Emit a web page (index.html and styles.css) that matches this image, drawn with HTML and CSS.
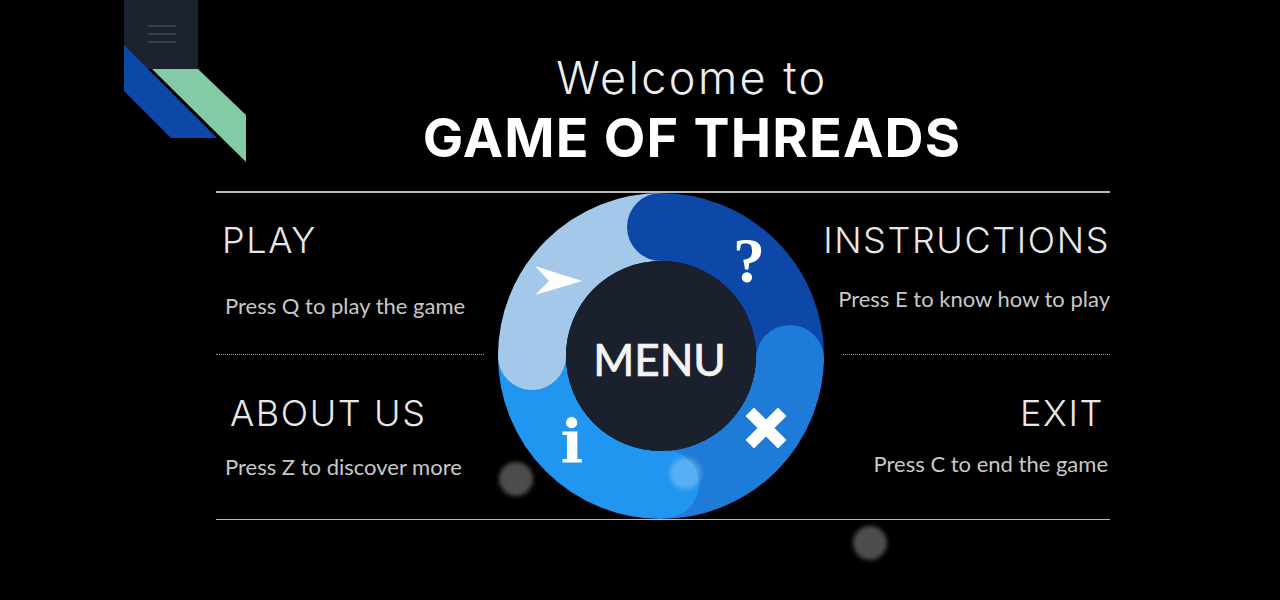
FILE: index.html
```html
<!DOCTYPE html>
<html lang="en">
<head>
    <meta charset="UTF-8">
    <meta name="viewport" content="width=device-width, initial-scale=1.0">
    <title>Game of Threads</title>
    <link rel="stylesheet" href="styles.css">
</head>
<body>

<!-- corner ribbon with the hamburger -->
<svg class="ribbon" width="130" height="170" viewBox="0 0 130 170">
    <rect x="0" y="0" width="74" height="69" fill="#1c2230"/>
    <path d="M24 26h28M24 34h28M24 42h28" stroke="#343b49" stroke-width="2"/>
    <polygon points="0,45 93,138 47,138 0,91" fill="#0d47a8"/>
    <polygon points="28,69 74,69 122,115 122,162" fill="#82cba6"/>
</svg>

<header class="title">
    <p class="welcome">Welcome to</p>
    <h1 class="game-name">GAME OF THREADS</h1>
</header>

<main class="menu">
    <section class="item item-play">
        <h2>PLAY</h2>
        <p>Press Q to play the game</p>
    </section>

    <svg class="wheel" width="326" height="326" viewBox="0 0 326 326">
        <!-- ring parts, each one starts with a round head on top of the previous part -->
        <g fill="none" stroke-width="68">
            <path d="M163 34A129 129 0 0 1 292 163" stroke="#0d47a8"/>
            <path d="M292 163A129 129 0 0 1 163 292" stroke="#1e7cd8"/>
            <path d="M163 292A129 129 0 0 1 34 163" stroke="#2196f0"/>
            <path d="M34 163A129 129 0 0 1 163 34" stroke="#a4c8ea"/>
        </g>
        <circle cx="163" cy="34" r="34" fill="#0d47a8"/>
        <circle cx="292" cy="166" r="34" fill="#1e7cd8"/>
        <circle cx="167" cy="291" r="34" fill="#2196f0"/>
        <circle cx="34" cy="163" r="34" fill="#a4c8ea"/>
        <circle cx="163" cy="163" r="95" fill="#1a202c"/>
        <polygon points="37,73 84,88 37,102 51,88" fill="#fff"/>
        <text class="wheel-glyph glyph-help" x="251" y="89">?</text>
        <text class="wheel-glyph glyph-info" x="74" y="270">i</text>
        <path d="M256 223L280 247M280 223L256 247" stroke="#fff" stroke-width="12" stroke-linecap="square"/>
        <text class="wheel-label" x="161.500" y="183">MENU</text>
    </svg>

    <section class="item item-right item-instructions">
        <h2>INSTRUCTIONS</h2>
        <p>Press E to know how to play</p>
    </section>

    <section class="item item-about">
        <h2>ABOUT US</h2>
        <p>Press Z to discover more</p>
    </section>

    <section class="item item-right item-exit">
        <h2>EXIT</h2>
        <p>Press C to end the game</p>
    </section>
</main>

<div class="bubble bubble-left"></div>
<div class="bubble bubble-wheel"></div>
<div class="bubble bubble-bottom"></div>

</body>
</html>
```

FILE: styles.css
```css
body {
    margin: 0;
    height: 600px;
    overflow: hidden;
    background-color: #000;
    color: #fff;
    font-family: Inter, sans-serif;
}

.ribbon {
    position: absolute;
    top: 0;
    left: 124px;
}

.title {
    height: 191px;
    box-sizing: border-box;
    padding: 52px 0 0 104px;
    text-align: center;
}

.welcome {
    margin: 0;
    font-size: 45px;
    font-weight: 300;
    line-height: 52px;
    letter-spacing: 2.4px;
    color: #eee;
}

.game-name {
    margin: 4px 0 0;
    font-size: 54px;
    font-weight: 700;
    line-height: 60px;
    letter-spacing: 1.2px;
}

.menu {
    display: grid;
    grid-template-columns: 268px 359px 267px;
    grid-template-rows: 162px 1fr;
    width: 894px;
    height: 329px;
    box-sizing: border-box;
    margin-left: 216px;
    border-top: 2px solid #bbb;
    border-bottom: 1px solid #bbb;
}

.item {
    box-sizing: border-box;
}

.item h2 {
    margin: 0;
    font-size: 36px;
    font-weight: 300;
    line-height: 44px;
    letter-spacing: 1.6px;
    color: #e8e8e8;
}

.item p {
    margin: 0;
    font-family: Lato, sans-serif;
    font-size: 22px;
    line-height: 28px;
    white-space: nowrap;
    color: #c8c8c8;
}

.item-right {
    text-align: right;
}

.item-play,
.item-instructions {
    padding-top: 25px;
    border-bottom: 1px dotted #999;
}

.item-about,
.item-exit {
    padding-top: 36px;
}

.item-play h2 {
    padding-left: 6px;
}

.item-play p {
    margin-top: 30px;
    padding-left: 9px;
}

.item-instructions h2 {
    margin-left: -30px;
}

.item-instructions p {
    margin: 23px 0 0 -30px;
}

.item-about h2 {
    padding-left: 14px;
}

.item-about p {
    margin-top: 18px;
    padding-left: 9px;
}

.item-exit h2 {
    padding-right: 6px;
}

.item-exit p {
    margin-top: 15px;
    padding-right: 2px;
}

.wheel {
    grid-column: 2;
    grid-row: 1 / 3;
    margin: 0 0 0 14px;
}

.wheel-glyph {
    fill: #fff;
    font-weight: 700;
    text-anchor: middle;
}

.glyph-help {
    font-family: "Liberation Serif", serif;
    font-size: 64px;
}

.glyph-info {
    font-family: "DejaVu Serif", serif;
    font-size: 60px;
}

.wheel-label {
    fill: #f4f4f4;
    stroke: #f4f4f4;
    stroke-width: 0.6px;
    font-family: Lato, sans-serif;
    font-size: 44px;
    font-weight: 500;
    text-anchor: middle;
}

.bubble {
    position: absolute;
    width: 34px;
    height: 34px;
    border-radius: 50%;
    background-color: rgba(255, 255, 255, 0.3);
    filter: blur(2px);
}

.bubble-left {
    top: 462px;
    left: 499px;
}

.bubble-wheel {
    top: 458px;
    left: 670px;
    width: 31px;
    height: 31px;
    background-color: rgba(255, 255, 255, 0.25);
}

.bubble-bottom {
    top: 526px;
    left: 853px;
}
```
